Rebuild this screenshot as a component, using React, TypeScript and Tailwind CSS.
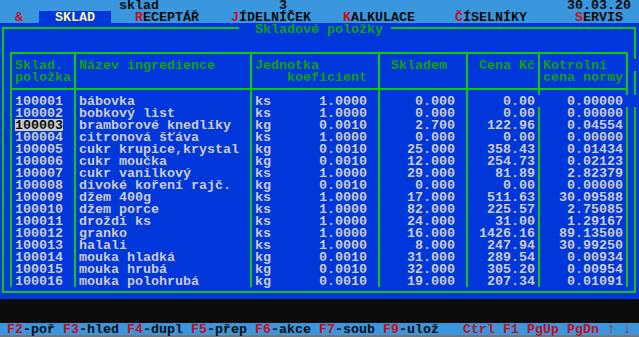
import clsx from 'clsx'

/* DOS text-mode screen: 80 cols x 8px, rows 12px */

type Seg = [number, string, string?]

const ROWS = [
  ['100001', 'bábovka', 'ks', '1.0000', '0.000', '0.00', '0.00000'],
  ['100002', 'bobkový list', 'ks', '1.0000', '0.000', '0.00', '0.00000'],
  ['100003', 'bramborové knedlíky', 'kg', '0.0010', '2.700', '122.96', '0.04554'],
  ['100004', 'citronová šťáva', 'ks', '1.0000', '0.000', '0.00', '0.00000'],
  ['100005', 'cukr krupice,krystal', 'kg', '0.0010', '25.000', '358.43', '0.01434'],
  ['100006', 'cukr moučka', 'kg', '0.0010', '12.000', '254.73', '0.02123'],
  ['100007', 'cukr vanilkový', 'ks', '1.0000', '29.000', '81.89', '2.82379'],
  ['100008', 'divoké koření rajč.', 'kg', '0.0010', '0.000', '0.00', '0.00000'],
  ['100009', 'džem 400g', 'ks', '1.0000', '17.000', '511.63', '30.09588'],
  ['100010', 'džem porce', 'ks', '1.0000', '82.000', '225.57', '2.75085'],
  ['100011', 'droždí ks', 'ks', '1.0000', '24.000', '31.00', '1.29167'],
  ['100012', 'granko', 'ks', '1.0000', '16.000', '1426.16', '89.13500'],
  ['100013', 'halali', 'ks', '1.0000', '8.000', '247.94', '30.99250'],
  ['100014', 'mouka hladká', 'kg', '0.0010', '31.000', '289.54', '0.00934'],
  ['100015', 'mouka hrubá', 'kg', '0.0010', '32.000', '305.20', '0.00954'],
  ['100016', 'mouka polohrubá', 'kg', '0.0010', '19.000', '207.34', '0.01091'],
]

const SELECTED = 2

// lays text segments out on the character grid, padding with spaces
function Line({ segs, className }: { segs: Seg[]; className?: string }) {
  let cur = 0
  const out: React.ReactNode[] = []
  segs.forEach(([col, text, cls], i) => {
    out.push(' '.repeat(Math.max(0, col - cur)))
    out.push(<span key={i} className={cls}>{text}</span>)
    cur = col + text.length
  })
  return <div className={clsx('ml-[-1px] whitespace-pre', className)}>{out}</div>
}

const RED = 'text-[#C50F1F]'

function MenuItem({ hot, rest }: { hot: string; rest: string }) {
  return (
    <>
      <span className={RED}>{hot}</span>
      {rest}
    </>
  )
}

const LINE = 'border-[#16C60C]'

function Cell({ gap, className, children }: { gap?: boolean; className?: string; children?: React.ReactNode }) {
  return (
    <div className={clsx('h-[12px] border-r-2 whitespace-pre text-[#CCCCCC]', gap ? 'border-transparent' : LINE, className)}>
      {children}
    </div>
  )
}

function Head({ className, children }: { className?: string; children: React.ReactNode }) {
  return (
    <>
      <div className={clsx('h-[34px] pt-[5px] border-r-2 whitespace-pre text-[#13A10E]', LINE, className)}>{children}</div>
      <div className={clsx('h-[7px] border-t-2 border-r-2', LINE)} />
    </>
  )
}

export default function App() {
  return (
    <div className="w-[639px] h-[337px] overflow-hidden bg-[#0C0C0C] font-['Liberation_Mono',monospace] font-bold text-[13.33px] leading-[13px]">
      {/* title row */}
      <div className="h-[11px] bg-[#3A96DD] text-[#0C0C0C]">
        <Line className="leading-[12px]" segs={[[15, 'sklad'], [35, '3'], [71, '30.03.20']]} />
      </div>

      {/* menu */}
      <div className="h-[12px] bg-[#3A96DD] text-[#0C0C0C]">
        <div className="ml-[-1px] h-[12px] whitespace-pre">
          {'  '}<span className={RED}>&amp;</span>{'  '}
          <span className="inline-block h-[12px] bg-[#0037DA] text-[#F9F1A5]">{'  SKLAD  '}</span>
          {'   '}<MenuItem hot="R" rest="ECEPTÁŘ" />
          {'    '}<MenuItem hot="J" rest="ÍDELNÍČEK" />
          {'    '}<MenuItem hot="K" rest="ALKULACE" />
          {'     '}<MenuItem hot="Č" rest="ÍSELNÍKY" />
          {'      '}<MenuItem hot="S" rest="ERVIS" />
        </div>
      </div>

      {/* work area */}
      <div className="h-[276px] bg-[#0037DA] pt-[4px] pl-[2px]">
        <div className={clsx('relative w-[634px] h-[266px] border-2', LINE)}>
          <div className="absolute left-[235px] top-[-6px] h-[12px] bg-[#0037DA] pl-[16px] pr-[8px] text-[#13A10E] whitespace-pre">
            Skladové položky
          </div>
          <div className="absolute right-[-2px] top-[30px] w-[2px] h-[12px] bg-[#0037DA]" />
          <div className="absolute right-[-2px] top-[66px] w-[2px] h-[12px] bg-[#0037DA]" />

          <div className={clsx('ml-[6px] mt-[23px] w-[618px] h-[235px] border-l-2 border-t-2 flex', LINE)}>
            <div className="w-[64px] flex flex-col">
              <Head className="pl-[3px]">
                <div className="h-[12px]">Sklad.</div>
                <div className="h-[12px]">položka</div>
              </Head>
              {ROWS.map((r, i) => (
                <Cell key={i} className="pl-[3px]">
                  <span className={i === SELECTED ? 'inline-block h-[12px] bg-[#CCCCCC] text-[#0C0C0C]' : ''}>{r[0]}</span>
                </Cell>
              ))}
            </div>

            <div className="w-[176px] flex flex-col">
              <Head className="pl-[3px]">Název ingredience</Head>
              {ROWS.map((r, i) => (
                <Cell key={i} className="pl-[3px]">{r[1]}</Cell>
              ))}
            </div>

            <div className="w-[128px] flex flex-col">
              <Head>
                <div className="h-[12px] pl-[3px]">Jednotka</div>
                <div className="h-[12px] text-right pr-[11px]">koeficient</div>
              </Head>
              {ROWS.map((r, i) => (
                <Cell key={i} className="flex justify-between pl-[3px] pr-[11px]">
                  <span>{r[2]}</span>
                  <span>{r[3]}</span>
                </Cell>
              ))}
            </div>

            <div className="w-[88px] flex flex-col">
              <Head className="pl-[11px]">Skladem</Head>
              {ROWS.map((r, i) => (
                <Cell key={i} className="text-right pr-[11px]">{r[4]}</Cell>
              ))}
            </div>

            <div className="w-[72px] flex flex-col">
              <Head className="pl-[11px]">Cena Kč</Head>
              {ROWS.map((r, i) => (
                <Cell key={i} gap={i === 0} className="text-right pr-[3px]">{r[5]}</Cell>
              ))}
            </div>

            <div className="w-[88px] flex flex-col">
              <Head className="pl-[3px]">
                <div className="h-[12px]">Kotrolní</div>
                <div className="h-[12px]">cena normy</div>
              </Head>
              {ROWS.map((r, i) => (
                <Cell key={i} gap={i === 0} className="text-right pr-[3px]">{r[6]}</Cell>
              ))}
            </div>
          </div>
        </div>
      </div>

      <div className="h-[24px]" />

      {/* function keys */}
      <div className="h-[12px] bg-[#3A96DD] text-[#0C0C0C]">
        <Line
          segs={[
            [1, 'F2', RED], [3, '-poř'],
            [8, 'F3', RED], [10, '-hled'],
            [16, 'F4', RED], [18, '-dupl'],
            [24, 'F5', RED], [26, '-přep'],
            [32, 'F6', RED], [34, '-akce'],
            [40, 'F7', RED], [42, '-soub'],
            [48, 'F9', RED], [50, '-ulož'],
            [58, 'Ctrl F1 PgUp PgDn ↑ ↓', RED],
          ]}
        />
      </div>
      <div className="h-[2px] bg-[#767676]" />
    </div>
  )
}
